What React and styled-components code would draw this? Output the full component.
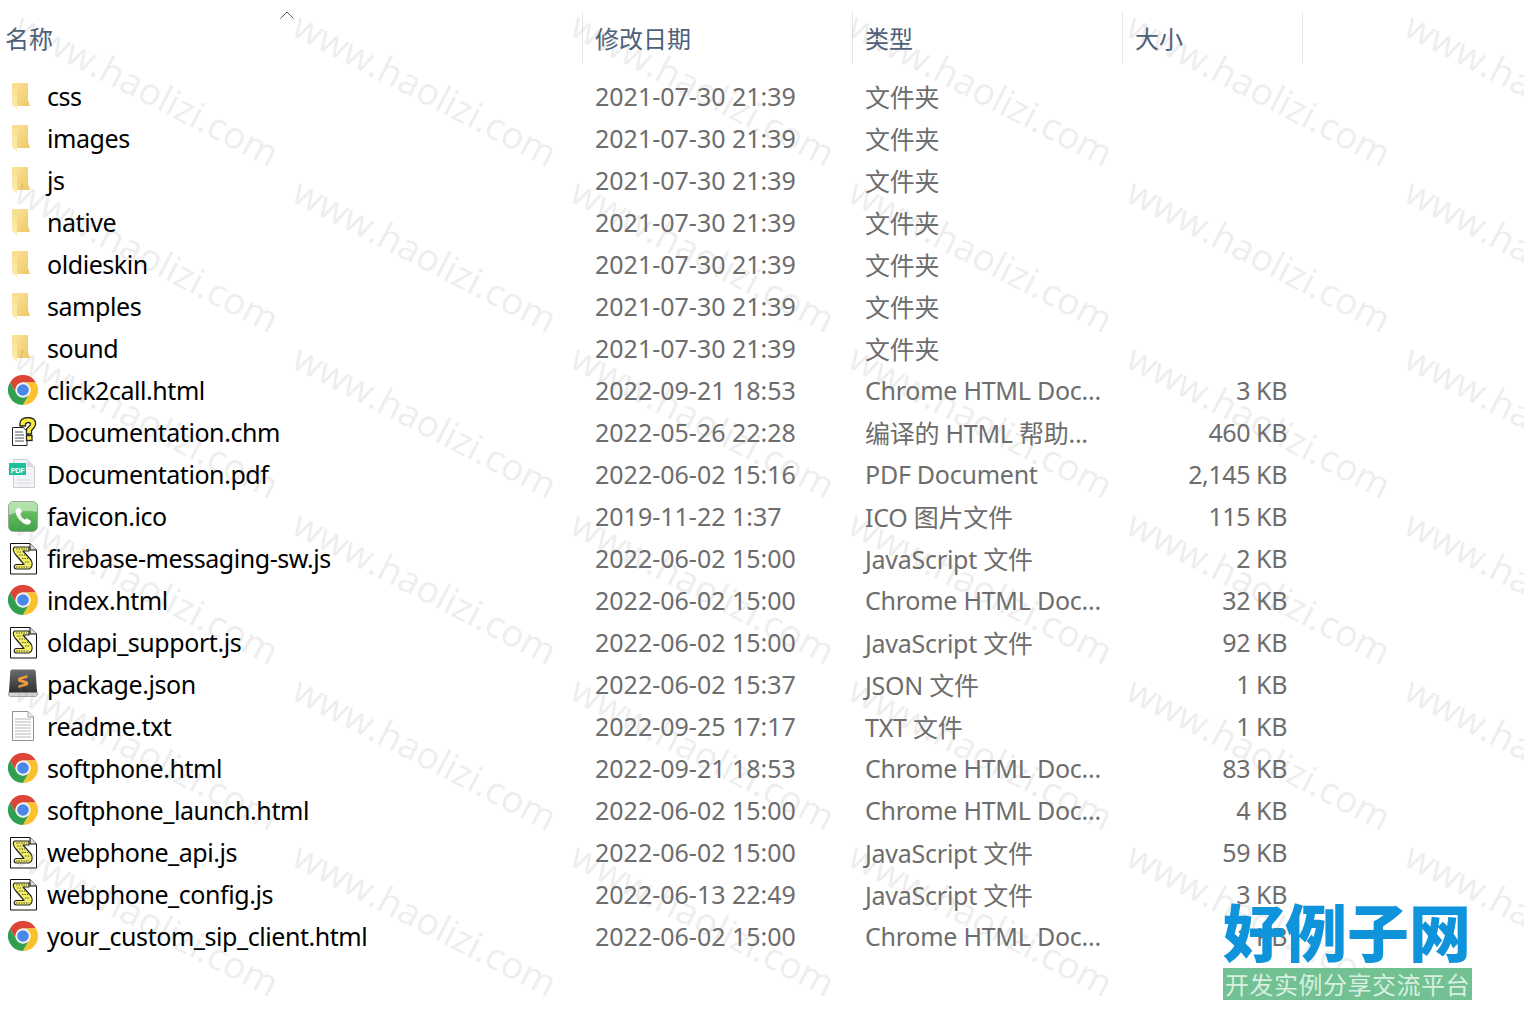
import React from "react";
import styled, { createGlobalStyle } from "styled-components";

const Global = createGlobalStyle`
  html, body { margin: 0; padding: 0; background: #fff; }
  body { font-family: "Open Sans", "Noto Sans CJK SC", sans-serif; }
`;

const CJK = `"Noto Sans", "Noto Sans CJK SC", sans-serif`;

const Page = styled.div`
  position: relative;
  width: 1524px;
  height: 1010px;
  overflow: hidden;
  background: #fff;
  font-family: ${CJK};
  font-size: 25px;
`;

const Header = styled.div`
  display: grid;
  grid-template-columns: 583px 270px 270px 180px;
  height: 51px;
  margin-top: 12px;
  padding-bottom: 12px;
`;

const HeaderCell = styled.div`
  position: relative;
  display: flex;
  align-items: center;
  padding-left: ${(p) => p.$pad}px;
  padding-bottom: 1px;
  color: #4c607a;
  font-size: 24px;
  border-right: 1px solid #e5e5e5;
`;

const SortCaret = styled.svg`
  position: absolute;
  left: 280px;
  top: -1px;
  width: 14px;
  height: 8px;
`;

const Rows = styled.div`
  display: flex;
  flex-direction: column;
`;

const Row = styled.div`
  display: grid;
  grid-template-columns: 583px 270px 270px 164px;
  height: 42px;
  align-items: center;
`;

const NameCell = styled.div`
  display: flex;
  align-items: center;
  padding-left: 8px;
  color: #000;
  letter-spacing: -0.44px;
  white-space: nowrap;
`;

const IconBox = styled.span`
  display: flex;
  width: 30px;
  height: 30px;
  margin-right: 9px;
  flex: none;
`;

const DateCell = styled.div`
  color: #6d6d6d;
  padding-left: 12px;
  white-space: nowrap;
`;

const TypeCell = styled.div`
  color: #6d6d6d;
  padding-left: 12px;
  letter-spacing: -0.25px;
  white-space: nowrap;
`;

const SizeCell = styled.div`
  color: #6d6d6d;
  text-align: right;
  letter-spacing: -0.42px;
  white-space: nowrap;
`;

const Watermark = styled.div`
  position: absolute;
  top: 0;
  left: 0;
  display: grid;
  grid-template-columns: repeat(6, 278px);
  grid-auto-rows: 166px;
  pointer-events: none;
`;

const WatermarkTile = styled.div`
  position: relative;
`;

const WatermarkText = styled.span`
  position: absolute;
  left: 30px;
  top: -1px;
  transform-origin: 0 0;
  transform: rotate(27.3deg);
  font-family: "Open Sans", sans-serif;
  font-size: 37px;
  color: rgba(120, 120, 120, 0.14);
  white-space: nowrap;
`;

const Logo = styled.div`
  position: absolute;
  left: 1223px;
  top: 898px;
  width: 249px;
  display: flex;
  flex-direction: column;
  pointer-events: none;
`;

const LogoTitle = styled.div`
  height: 70px;
  line-height: 64px;
  font-family: "Noto Sans CJK SC", sans-serif;
  font-size: 62px;
  font-weight: 900;
  color: #0f94dc;
  white-space: nowrap;
`;

const LogoBand = styled.div`
  height: 32px;
  line-height: 31px;
  background: #72c193;
  color: #d8efe1;
  font-family: "Noto Sans CJK SC", sans-serif;
  font-size: 24px;
  letter-spacing: 0.5px;
  text-align: center;
  white-space: nowrap;
  overflow: hidden;
`;

const FolderIcon = () => (
  <svg width="30" height="30" viewBox="0 0 30 30">
    <defs>
      <linearGradient id="fold" x1="0" y1="0" x2="1" y2="1">
        <stop offset="0" stopColor="#fbe59a" />
        <stop offset="1" stopColor="#eec663" />
      </linearGradient>
      <linearGradient id="flap" x1="0" y1="0" x2="0" y2="1">
        <stop offset="0" stopColor="#f8dd8a" />
        <stop offset="1" stopColor="#fdeeb8" />
      </linearGradient>
    </defs>
    <path d="M4 2 H20 V19 L22 25 H9 V28 L4 24 Z" fill="url(#fold)" />
    <path d="M4 2 L9 5.5 V28 L4 24 Z" fill="url(#flap)" />
  </svg>
);

const ChromeIcon = () => (
  <svg width="30" height="30" viewBox="0 0 30 30">
    <path d="M2 7.5 A15 15 0 0 1 28 7.5 H15 A7.5 7.5 0 0 0 8.5 18.75 Z" fill="#dc4437" />
    <path d="M2 7.5 L8.5 18.75 A7.5 7.5 0 0 0 21.5 18.75 L15 30 A15 15 0 0 1 2 7.5 Z" fill="#30a04f" />
    <path d="M28 7.5 H15 A7.5 7.5 0 0 1 21.5 18.75 L15 30 A15 15 0 0 0 28 7.5 Z" fill="#fbc22e" />
    <circle cx="15" cy="15" r="7.4" fill="#f4f4f4" />
    <circle cx="15" cy="15" r="5.8" fill="#4a87e6" />
  </svg>
);

const ChmIcon = () => (
  <svg width="30" height="30" viewBox="0 0 30 30">
    <path d="M4.5 10.5 H15 L19 14 V28.5 H4.5 Z" fill="#fff" stroke="#222" strokeWidth="1" />
    <path d="M7 15 H15 M7 18 H16 M7 21 H16 M7 24 H16" stroke="#555" strokeWidth="1.2" />
    <path d="M12 9 C11 3 15 0.5 20 0.5 C25 0.5 28 3 27.5 7.5 C27 11 24 12 23.5 14 V17 H18.5 V12 C19.5 10 22.5 9.5 22.5 7 C22.5 5 19 5 17.5 7 V9 Z" fill="#f7ec3e" stroke="#222" strokeWidth="1.3" strokeLinejoin="round" />
    <rect x="18.5" y="18.5" width="5.5" height="5" fill="#f7ec3e" stroke="#222" strokeWidth="1.3" />
  </svg>
);

const PdfIcon = () => (
  <svg width="30" height="30" viewBox="0 0 30 30">
    <path d="M5.5 0.5 H19 L26.5 8 V28.5 H5.5 Z" fill="#f2f4f7" stroke="#c9cbcd" strokeWidth="1" />
    <path d="M19 0.5 V8 H26.5 Z" fill="#d9dcdf" />
    <path d="M9 21 H23 M9 24 H23" stroke="#dcdcdc" strokeWidth="1" />
    <rect x="1" y="4" width="17" height="12" fill="#1cc09a" />
    <text x="9.5" y="13.5" textAnchor="middle" fontFamily="Liberation Sans, sans-serif" fontSize="7.5" fontWeight="700" fill="#fff">PDF</text>
  </svg>
);

const PhoneIcon = () => (
  <svg width="30" height="32" viewBox="0 0 30 32">
    <defs>
      <linearGradient id="ph" x1="0" y1="0" x2="0" y2="1">
        <stop offset="0" stopColor="#7cc96f" />
        <stop offset="1" stopColor="#3ea544" />
      </linearGradient>
    </defs>
    <rect x="0.5" y="0.5" width="29" height="30" rx="5" fill="url(#ph)" stroke="#9aa79a" strokeWidth="1" />
    <path d="M1 6 Q1 1 6 1 H24 Q29 1 29 6 V11 Q15 8 1 14 Z" fill="#cfeec9" opacity="0.7" />
    <path d="M9 7.5 L11.5 6.5 L14 11 L12.3 12.8 C13 15.5 14.6 17.4 17 18.8 L19 17.2 L23.2 20.3 L22 22.7 C20.5 24.2 17.5 23.8 14 21.3 C10 18.3 7.5 13.5 7.8 10 C7.9 9 8.3 8.1 9 7.5 Z" fill="#fff" />
  </svg>
);

const ScriptIcon = () => (
  <svg width="30" height="32" viewBox="0 0 30 32">
    <path d="M2.5 0.5 H22 L28.5 7 V31 H2.5 Z" fill="#fff" stroke="#111" strokeWidth="1" />
    <path d="M22 0.5 V7 H28.5" fill="#ddd" stroke="#111" strokeWidth="1" />
    <path d="M6.5 4 H21 V8 H15 L23 17 C25 20 24.5 25 21 26 H8 C5.5 25.5 5.5 22 8 21.5 H16 L8 12 C5 9 4.5 5 6.5 4 Z" fill="#f5ef62" stroke="#222" strokeWidth="1.2" strokeLinejoin="round" />
    <path d="M8 6 H19 M9 9 H14 M11 12 H17 M14 15.5 H20 M17 19 H22 M8 24 H21" stroke="#555" strokeWidth="1.2" strokeDasharray="1.5 1" />
  </svg>
);

const SublimeIcon = () => (
  <svg width="30" height="30" viewBox="0 0 30 30">
    <defs>
      <linearGradient id="sb" x1="0" y1="0" x2="0" y2="1">
        <stop offset="0" stopColor="#6a6e72" />
        <stop offset="1" stopColor="#2c2d2f" />
      </linearGradient>
    </defs>
    <path d="M0.5 25 L2 20 H28 L29.5 25 Q29.5 27.5 27.5 27.5 H2.5 Q0.5 27.5 0.5 25 Z" fill="#d3d5d5" stroke="#a5a8a8" strokeWidth="1" />
    <path d="M4 0.5 H26 Q27.5 0.5 27.7 2 L29 23.5 H1 L2.3 2 Q2.5 0.5 4 0.5 Z" fill="url(#sb)" />
    <path d="M19.5 6 L11 8.5 C9.5 9 9.5 12 11 12.7 L16.5 14.5 L10.5 16.5 V19 L19 16.5 C20.5 16 20.5 13 19 12.3 L13.5 10.6 L19.5 8.7 Z" fill="#f1993a" />
  </svg>
);

const TxtIcon = () => (
  <svg width="30" height="30" viewBox="0 0 30 30">
    <path d="M4.5 0.5 H20 L25.5 6 V29.5 H4.5 Z" fill="#fff" stroke="#909090" strokeWidth="1" />
    <path d="M20 0.5 V6 H25.5" fill="#eee" stroke="#a0a0a0" strokeWidth="1" />
    <path d="M7 8 H23 M7 11 H23 M7 14 H23 M7 17 H23 M7 20 H23 M7 23 H23 M7 26 H23" stroke="#b8b8b8" strokeWidth="1" />
  </svg>
);

const icons = {
  folder: FolderIcon,
  chrome: ChromeIcon,
  chm: ChmIcon,
  pdf: PdfIcon,
  phone: PhoneIcon,
  script: ScriptIcon,
  sublime: SublimeIcon,
  txt: TxtIcon,
};

const FOLDER_DATE = "2021-07-30 21:39";
const files = [
  ["folder", "css", FOLDER_DATE, "文件夹", ""],
  ["folder", "images", FOLDER_DATE, "文件夹", ""],
  ["folder", "js", FOLDER_DATE, "文件夹", ""],
  ["folder", "native", FOLDER_DATE, "文件夹", ""],
  ["folder", "oldieskin", FOLDER_DATE, "文件夹", ""],
  ["folder", "samples", FOLDER_DATE, "文件夹", ""],
  ["folder", "sound", FOLDER_DATE, "文件夹", ""],
  ["chrome", "click2call.html", "2022-09-21 18:53", "Chrome HTML Doc...", "3 KB"],
  ["chm", "Documentation.chm", "2022-05-26 22:28", "编译的 HTML 帮助...", "460 KB"],
  ["pdf", "Documentation.pdf", "2022-06-02 15:16", "PDF Document", "2,145 KB"],
  ["phone", "favicon.ico", "2019-11-22 1:37", "ICO 图片文件", "115 KB"],
  ["script", "firebase-messaging-sw.js", "2022-06-02 15:00", "JavaScript 文件", "2 KB"],
  ["chrome", "index.html", "2022-06-02 15:00", "Chrome HTML Doc...", "32 KB"],
  ["script", "oldapi_support.js", "2022-06-02 15:00", "JavaScript 文件", "92 KB"],
  ["sublime", "package.json", "2022-06-02 15:37", "JSON 文件", "1 KB"],
  ["txt", "readme.txt", "2022-09-25 17:17", "TXT 文件", "1 KB"],
  ["chrome", "softphone.html", "2022-09-21 18:53", "Chrome HTML Doc...", "83 KB"],
  ["chrome", "softphone_launch.html", "2022-06-02 15:00", "Chrome HTML Doc...", "4 KB"],
  ["script", "webphone_api.js", "2022-06-02 15:00", "JavaScript 文件", "59 KB"],
  ["script", "webphone_config.js", "2022-06-13 22:49", "JavaScript 文件", "3 KB"],
  ["chrome", "your_custom_sip_client.html", "2022-06-02 15:00", "Chrome HTML Doc...", "1 KB"],
];

export default function App() {
  return (
    <Page>
      <Global />
      <Header>
        <HeaderCell $pad={5}>
          名称
          <SortCaret viewBox="0 0 14 8">
            <path d="M0.5 7.5 L7 1 L13.5 7.5" fill="none" stroke="#555" strokeWidth="1" />
          </SortCaret>
        </HeaderCell>
        <HeaderCell $pad={12}>修改日期</HeaderCell>
        <HeaderCell $pad={12}>类型</HeaderCell>
        <HeaderCell $pad={12}>大小</HeaderCell>
      </Header>
      <Rows>
        {files.map(([icon, name, date, type, size]) => {
          const Icon = icons[icon];
          return (
            <Row key={name}>
              <NameCell>
                <IconBox><Icon /></IconBox>
                {name}
              </NameCell>
              <DateCell>{date}</DateCell>
              <TypeCell>{type}</TypeCell>
              <SizeCell>{size}</SizeCell>
            </Row>
          );
        })}
      </Rows>
      <Watermark>
        {Array.from({ length: 36 }, (_, i) => (
          <WatermarkTile key={i}>
            <WatermarkText>www.haolizi.com</WatermarkText>
          </WatermarkTile>
        ))}
      </Watermark>
      <Logo>
        <LogoTitle>好例子网</LogoTitle>
        <LogoBand>开发实例分享交流平台</LogoBand>
      </Logo>
    </Page>
  );
}
